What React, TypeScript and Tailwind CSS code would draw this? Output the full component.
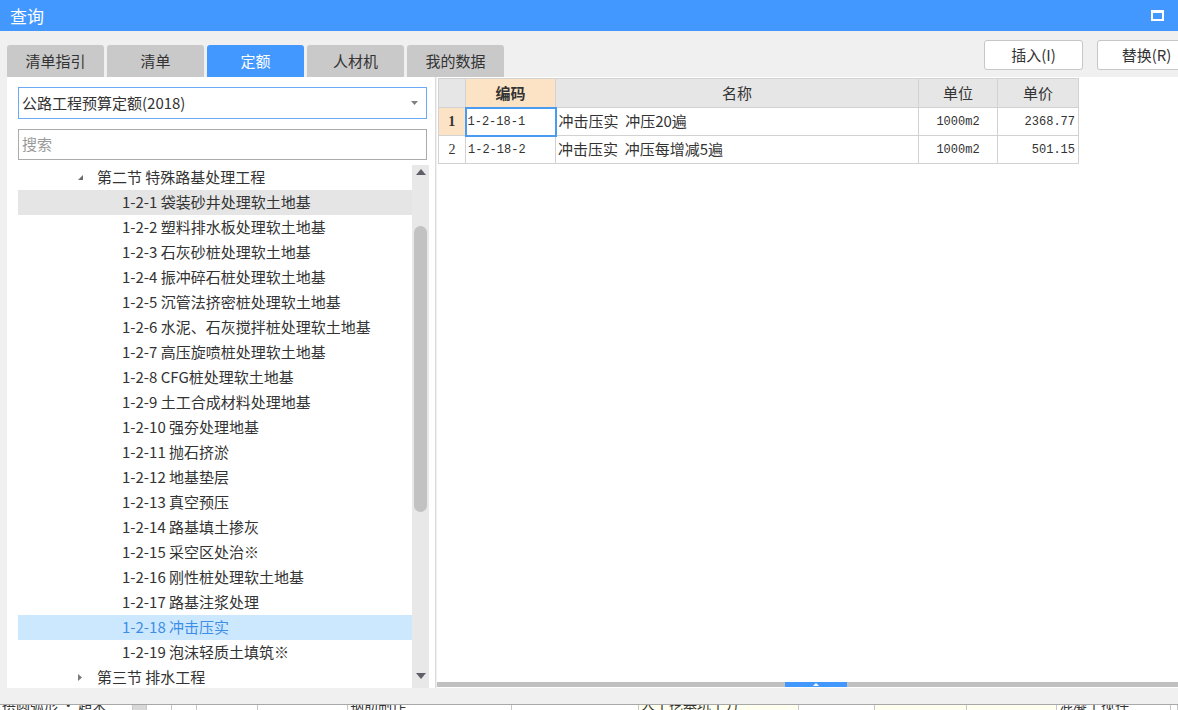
import React from "react";

const cn = '"Noto Sans CJK SC", "Microsoft YaHei", sans-serif';

const tabs = ["清单指引", "清单", "定额", "人材机", "我的数据"];

const treeItems = [
  "1-2-1 袋装砂井处理软土地基",
  "1-2-2 塑料排水板处理软土地基",
  "1-2-3 石灰砂桩处理软土地基",
  "1-2-4 振冲碎石桩处理软土地基",
  "1-2-5 沉管法挤密桩处理软土地基",
  "1-2-6 水泥、石灰搅拌桩处理软土地基",
  "1-2-7 高压旋喷桩处理软土地基",
  "1-2-8 CFG桩处理软土地基",
  "1-2-9 土工合成材料处理地基",
  "1-2-10 强夯处理地基",
  "1-2-11 抛石挤淤",
  "1-2-12 地基垫层",
  "1-2-13 真空预压",
  "1-2-14 路基填土掺灰",
  "1-2-15 采空区处治※",
  "1-2-16 刚性桩处理软土地基",
  "1-2-17 路基注浆处理",
  "1-2-18 冲击压实",
  "1-2-19 泡沫轻质土填筑※",
];

const rows = [
  { no: "1", code: "1-2-18-1", name: "冲击压实\u00a0\u00a0冲压20遍", unit: "1000m2", price: "2368.77" },
  { no: "2", code: "1-2-18-2", name: "冲击压实\u00a0\u00a0冲压每增减5遍", unit: "1000m2", price: "501.15" },
];

const bottomCells = [
  { w: 133, text: "拱圆弧形 · 超米", bg: "bg-white" },
  { w: 14, text: "", bg: "bg-[#d8d8d8]" },
  { w: 25, text: "", bg: "bg-white" },
  { w: 25, text: "", bg: "bg-white" },
  { w: 61, text: "", bg: "bg-white" },
  { w: 90, text: "", bg: "bg-white" },
  { w: 164, text: "钢筋制作", bg: "bg-white" },
  { w: 127, text: "", bg: "bg-white" },
  { w: 160, text: "人工挖基坑土方", bg: "bg-[#fffff0]" },
  { w: 76, text: "", bg: "bg-white" },
  { w: 92, text: "", bg: "bg-[#fffff0]" },
  { w: 90, text: "", bg: "bg-[#fffff0]" },
  { w: 114, text: "混凝土搅拌", bg: "bg-white" },
  { w: 7, text: "", bg: "bg-white" },
];

function DownTriangle() {
  return (
    <svg width="7" height="7" viewBox="0 0 7 7">
      <path d="M6 1 L6 6 L1 6 Z" fill="#6b6b6b" />
    </svg>
  );
}

function RightTriangle() {
  return (
    <svg width="6" height="9" viewBox="0 0 6 9">
      <path d="M1 1 L5 4.5 L1 8 Z" fill="#7a7a7a" />
    </svg>
  );
}

export default function App() {
  return (
    <div
      className="w-full h-[710px] overflow-hidden bg-[#f0f0f0] text-[#333]"
      style={{ fontFamily: cn }}
    >
      {/* title bar */}
      <div className="h-[31px] bg-[#4398ff] flex items-center pl-[10px] pr-[14px]">
        <span className="text-white text-[17px] leading-none">查询</span>
        <div className="ml-auto w-[13px] h-[11px] border-2 border-t-[3px] border-white bg-[#4398ff]" />
      </div>

      {/* tabs + actions */}
      <div className="h-[46px] flex pl-[7px]">
        <div className="flex gap-[3px] self-end">
          {tabs.map((t) => (
            <div
              key={t}
              className={
                t === "定额"
                  ? "w-[97px] h-[32px] rounded-t-[3px] bg-[#4398ff] text-white text-[15px] flex items-center justify-center"
                  : "w-[97px] h-[32px] rounded-t-[3px] bg-[#c9c9c9] text-[#333] text-[15px] flex items-center justify-center"
              }
            >
              {t}
            </div>
          ))}
        </div>
        <div className="ml-auto flex gap-[14px] mt-[9px] -mr-[18px]">
          <button className="w-[99px] h-[30px] bg-white border border-[#c6c6c6] rounded-[3px] text-[15px] text-[#333]">
            插入(I)
          </button>
          <button className="w-[99px] h-[30px] bg-white border border-[#c6c6c6] rounded-[3px] text-[15px] text-[#333]">
            替换(R)
          </button>
        </div>
      </div>

      {/* content */}
      <div className="h-[611px] flex pl-[7px]">
        {/* left panel */}
        <div className="w-[429px] h-full bg-white border-r border-[#dcdcdc] flex flex-col">
          <div className="pl-[11px] pr-[8px] pt-[10px]">
            <div className="h-[32px] border border-[#6aaaf5] flex items-center pl-[3px] pr-[8px] text-[15px]">
              <span>公路工程预算定额(2018)</span>
              <svg className="ml-auto" width="7" height="4" viewBox="0 0 7 4">
                <path d="M0 0 L7 0 L3.5 4 Z" fill="#808080" />
              </svg>
            </div>
            <div className="mt-[10px] h-[31px] border border-[#ababab] flex items-center pl-[3px] text-[15px] text-[#9a9a9a]">
              搜索
            </div>
          </div>
          <div className="mt-[5px] flex-1 flex pl-[11px] min-h-0 overflow-hidden">
            <div className="w-[394px] flex flex-col">
              <div className="h-[25px] shrink-0 flex items-center text-[15px] pl-[59px]">
                <DownTriangle />
                <span className="ml-[13px]">第二节 特殊路基处理工程</span>
              </div>
              {treeItems.map((t, i) => (
                <div
                  key={t}
                  className={
                    i === 0
                      ? "h-[25px] shrink-0 flex items-center text-[15px] pl-[104px] bg-[#e5e5e5]"
                      : t.startsWith("1-2-18 ")
                      ? "h-[25px] shrink-0 flex items-center text-[15px] pl-[104px] bg-[#cce8ff] text-[#3f8ee6]"
                      : "h-[25px] shrink-0 flex items-center text-[15px] pl-[104px]"
                  }
                >
                  {t}
                </div>
              ))}
              <div className="h-[25px] shrink-0 flex items-center text-[15px] pl-[59px]">
                <RightTriangle />
                <span className="ml-[14px]">第三节 排水工程</span>
              </div>
            </div>
            {/* vertical scrollbar */}
            <div className="w-[17px] h-full bg-[#e8e8e8] flex flex-col items-center">
              <svg className="mt-[4px]" width="10" height="6" viewBox="0 0 10 6">
                <path d="M0 6 L5 0 L10 6 Z" fill="#5f5f6a" />
              </svg>
              <div className="mt-[51px] w-[13px] h-[286px] rounded-full bg-[#c2c2c2]" />
              <svg className="mt-auto mb-[9px]" width="10" height="6" viewBox="0 0 10 6">
                <path d="M0 0 L10 0 L5 6 Z" fill="#5f5f6a" />
              </svg>
            </div>
          </div>
        </div>

        {/* right panel */}
        <div className="flex-1 h-full bg-white flex flex-col ml-[1px]">
          <div className="flex-1 pt-[1px] pl-[1px]">
            <table
              className="border-collapse text-[13px]"
              style={{ fontFamily: '"Liberation Mono", "Noto Sans CJK SC", monospace' }}
            >
              <thead>
                <tr className="h-[29px]">
                  <th className="w-[27px] border border-[#d2d2d2] bg-[#e6e6e6]" />
                  <th
                    className="w-[90px] border border-[#d2d2d2] bg-[#fde3c6] font-bold text-[15px] text-[#333]"
                    style={{ fontFamily: cn }}
                  >
                    编码
                  </th>
                  <th
                    className="w-[363px] border border-[#d2d2d2] bg-[#e6e6e6] font-normal text-[15px]"
                    style={{ fontFamily: cn }}
                  >
                    名称
                  </th>
                  <th
                    className="w-[79px] border border-[#d2d2d2] bg-[#e6e6e6] font-normal text-[15px]"
                    style={{ fontFamily: cn }}
                  >
                    单位
                  </th>
                  <th
                    className="w-[81px] border border-[#d2d2d2] bg-[#e6e6e6] font-normal text-[15px]"
                    style={{ fontFamily: cn }}
                  >
                    单价
                  </th>
                </tr>
              </thead>
              <tbody>
                {rows.map((r, i) => (
                  <tr key={r.no} className="h-[28px]">
                    <td
                      className={
                        i === 0
                          ? "border border-[#d2d2d2] bg-[#fde3c6] text-center font-bold text-[14px]"
                          : "border border-[#d2d2d2] bg-white text-center text-[14px]"
                      }
                      style={{ fontFamily: '"Liberation Serif", serif' }}
                    >
                      {r.no}
                    </td>
                    <td
                      className={
                        i === 0
                          ? "border-2 border-[#4a9bf2] pl-[1px] text-[12px]"
                          : "border border-[#d2d2d2] pl-[2px] text-[12px]"
                      }
                    >
                      {r.code}
                    </td>
                    <td className="border border-[#d2d2d2] pl-[2px] text-[15px]" style={{ fontFamily: cn }}>
                      {r.name}
                    </td>
                    <td className="border border-[#d2d2d2] text-center text-[12px]">{r.unit}</td>
                    <td className="border border-[#d2d2d2] text-right pr-[3px] text-[12px]">{r.price}</td>
                  </tr>
                ))}
              </tbody>
            </table>
          </div>
          {/* horizontal scrollbar */}
          <div className="h-[5px] mb-[1px] bg-[#c0c0c0] flex">
            <div className="ml-[348px] w-[62px] h-full bg-[#4398ff] flex items-center justify-center">
              <svg width="6" height="3" viewBox="0 0 6 3">
                <path d="M0 3 L3 0 L6 3 Z" fill="#fff" />
              </svg>
            </div>
          </div>
        </div>
      </div>

      {/* gap */}
      <div className="h-[16px]" />

      {/* partially visible bottom grid */}
      <div className="h-[20px] flex border-t border-[#a8a8a8]">
        {bottomCells.map((c, i) => (
          <div
            key={i}
            className={`${c.bg} h-full border-r border-[#c8c8c8] text-[14px] leading-[14px] pl-[2px] overflow-hidden whitespace-nowrap`}
            style={{ width: c.w }}
          >
            <span className="relative -top-[8px]">{c.text}</span>
          </div>
        ))}
      </div>
    </div>
  );
}
